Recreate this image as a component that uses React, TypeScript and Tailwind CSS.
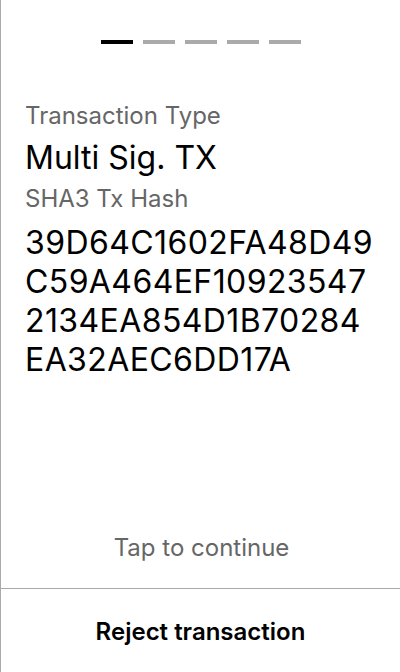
import React from "react";

export default function App() {
  const font = { fontFamily: "Inter, 'Noto Sans', sans-serif" };
  return (
    <div
      className="flex h-[672px] w-[400px] flex-col border-l border-[#aaaaaa] bg-white text-black"
      style={font}
    >
      <div className="flex justify-center gap-[10px] pt-[40px]">
        <div className="h-[4px] w-[32px] bg-black" />
        <div className="h-[4px] w-[32px] bg-[#aaaaaa]" />
        <div className="h-[4px] w-[32px] bg-[#aaaaaa]" />
        <div className="h-[4px] w-[32px] bg-[#aaaaaa]" />
        <div className="h-[4px] w-[32px] bg-[#aaaaaa]" />
      </div>
      <div className="flex flex-1 flex-col pl-[24px] pr-[16px] pt-[55px]">
        <div className="text-[24px] leading-[34px] text-[#666666]">Transaction Type</div>
        <div className="text-[32px] leading-[50px]">Multi Sig. TX</div>
        <div className="text-[24px] leading-[32px] text-[#666666]">SHA3 Tx Hash</div>
        <div className="mt-[8px] whitespace-nowrap text-[32px] leading-[39px] tracking-[0.4px]">
          39D64C1602FA48D49
          <br />
          C59A464EF10923547
          <br />
          2134EA854D1B70284
          <br />
          EA32AEC6DD17A
        </div>
      </div>
      <div className="flex h-[80px] items-center justify-center pl-[2px] text-[24px] text-[#666666]">
        Tap to continue
      </div>
      <div className="flex h-[84px] items-center justify-center border-t border-[#aaaaaa] pt-[2px] text-[24px] font-semibold">
        Reject transaction
      </div>
    </div>
  );
}
